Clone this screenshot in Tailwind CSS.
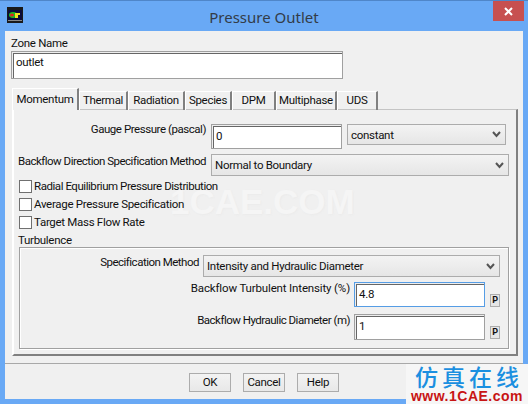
<!DOCTYPE html>
<html lang="en">
<head>
    <meta charset="UTF-8">
    <title>Pressure Outlet</title>
    <script src="https://cdn.jsdelivr.net/npm/@tailwindcss/browser@4"></script>
</head>
<body class="m-0 overflow-hidden">
<div class="relative w-[528px] h-[404px] overflow-hidden bg-[#69a9f5] border-t border-[#4f86c9] font-['Roboto',sans-serif] text-[11.5px] tracking-[-0.3px] leading-[16px] text-[#111]">

    <!-- title bar -->
    <div class="relative h-[30px] flex items-center justify-center">
        <svg class="absolute left-[7px] top-[6px]" width="16" height="16" viewBox="0 0 16 16">
            <rect width="16" height="16" fill="#1a1a1a"/>
            <rect x="1" y="3" width="14" height="10" fill="#0a0a3a"/>
            <ellipse cx="6" cy="8" rx="4" ry="3" fill="#18c020"/>
            <ellipse cx="5" cy="8" rx="2" ry="1.5" fill="#e02020"/>
            <path d="M8 6h5v2h-2v3H8z" fill="#f0e020"/>
            <rect x="1" y="13" width="14" height="1" fill="#888"/>
        </svg>
        <span class="text-[15px] tracking-normal text-[#333c48] font-['Noto_Sans',sans-serif] pt-[1px]">Pressure Outlet</span>
        <div class="absolute left-[493px] top-0 w-[31px] h-[20px] bg-[#c75050] flex items-center justify-center">
            <svg width="9" height="9" viewBox="0 0 9 9"><path d="M1 1l7 7M8 1L1 8" stroke="#fff" stroke-width="2"/></svg>
        </div>
    </div>

    <!-- client area -->
    <div class="ml-[5px] w-[518px] h-[368px] bg-[#f0f0f0] flex flex-col">
        <div class="h-[332px] pl-[6px] pt-[5px]">
            <div class="h-[15px] leading-[15px]">Zone Name</div>
            <div class="w-[332px] h-[28px] border border-[#a0a0a0] bg-white shadow-[inset_1px_1px_0_#eee,inset_2px_2px_0_#666] pl-[4px] pt-[2px]">outlet</div>

            <!-- tabs -->
            <div class="flex items-end h-[22px] mt-[9px] ml-[1px] relative z-10">
                <div class="w-[67px] h-[22px] bg-[#f0f0f0] border-t border-l border-white border-r-2 border-r-[#808080] text-center leading-[20px]">Momentum</div>
                <div class="w-[49px] h-[19px] border-t border-l border-white border-r-2 border-r-[#808080] text-center">Thermal</div>
                <div class="w-[57px] h-[19px] border-t border-l border-white border-r-2 border-r-[#808080] text-center">Radiation</div>
                <div class="w-[47px] h-[19px] border-t border-l border-white border-r-2 border-r-[#808080] text-center">Species</div>
                <div class="w-[44px] h-[19px] border-t border-l border-white border-r-2 border-r-[#808080] text-center">DPM</div>
                <div class="w-[61px] h-[19px] border-t border-l border-white border-r-2 border-r-[#808080] text-center">Multiphase</div>
                <div class="w-[41px] h-[19px] border-t border-l border-white border-r-2 border-r-[#808080] text-center">UDS</div>
            </div>

            <!-- tab panel -->
            <div class="relative w-[506px] h-[247px] ml-[1px] -mt-[1px] border-t border-t-[#c4c4c4] border-l-2 border-l-white border-r-2 border-r-[#808080] border-b-2 border-b-[#808080]">
                <!-- site watermark, behind the form -->
                <div class="absolute left-[156px] top-[72px] text-[35px] tracking-normal leading-[40px] font-bold font-['Liberation_Sans',sans-serif] text-[#f5f5f5] [text-shadow:1px_1px_2px_#ebebeb] pointer-events-none">1CAE.COM</div>

                <div class="relative pt-[14px] pl-[4px]">
                <div class="flex h-[30px]">
                    <div class="w-[188px] text-right -mt-[3px] tracking-[-0.45px]">Gauge Pressure (pascal)</div>
                    <div class="ml-[5px] w-[131px] h-[25px] border border-[#a0a0a0] bg-white shadow-[inset_1px_1px_0_#eee,inset_2px_2px_0_#666] pl-[4px] pt-[3px]">0</div>
                    <div class="ml-[5px] w-[159px] h-[21px] border border-[#acacac] bg-gradient-to-b from-[#f3f3f3] to-[#e6e6e6] flex items-center justify-between pl-[3px] pr-[4px]">
                        <span>constant</span>
                        <svg width="9" height="7" viewBox="0 0 9 7"><path d="M1 1l3.500 4L8 1" fill="none" stroke="#555" stroke-width="2"/></svg>
                    </div>
                </div>
                <div class="flex h-[23px]">
                    <div class="w-[188px] text-right mt-[-1px] whitespace-nowrap tracking-[-0.5px]">Backflow Direction Specification Method</div>
                    <div class="ml-[5px] w-[298px] h-[22px] border border-[#acacac] bg-gradient-to-b from-[#f3f3f3] to-[#e6e6e6] flex items-center justify-between pl-[3px] pr-[4px]">
                        <span>Normal to Boundary</span>
                        <svg width="9" height="7" viewBox="0 0 9 7"><path d="M1 1l3.500 4L8 1" fill="none" stroke="#555" stroke-width="2"/></svg>
                    </div>
                </div>
                <div class="flex items-center h-[18px] ml-[1px]">
                    <div class="w-[13px] h-[13px] border border-[#707070] bg-white"></div>
                    <span class="ml-[2px] tracking-[-0.45px]">Radial Equilibrium Pressure Distribution</span>
                </div>
                <div class="flex items-center h-[18px] ml-[1px]">
                    <div class="w-[13px] h-[13px] border border-[#707070] bg-white"></div>
                    <span class="ml-[2px]">Average Pressure Specification</span>
                </div>
                <div class="flex items-center h-[18px] ml-[1px]">
                    <div class="w-[13px] h-[13px] border border-[#707070] bg-white"></div>
                    <span class="ml-[2px]">Target Mass Flow Rate</span>
                </div>
                <div class="h-[16px] mt-[1px] leading-[16px]">Turbulence</div>

                <!-- turbulence group -->
                <div class="w-[490px] h-[102px] ml-[1px] -mt-[1px] border border-[#a0a0a0] shadow-[inset_1px_1px_0_#fff,1px_1px_0_#fff] pt-[7px] pl-[2px]">
                    <div class="flex h-[27px]">
                        <div class="w-[177px] text-right -mt-[1px] tracking-[-0.5px]">Specification Method</div>
                        <div class="ml-[4px] w-[297px] h-[22px] border border-[#acacac] bg-gradient-to-b from-[#f3f3f3] to-[#e6e6e6] flex items-center justify-between pl-[3px] pr-[4px]">
                            <span>Intensity and Hydraulic Diameter</span>
                            <svg width="9" height="7" viewBox="0 0 9 7"><path d="M1 1l3.500 4L8 1" fill="none" stroke="#555" stroke-width="2"/></svg>
                        </div>
                    </div>
                    <div class="flex h-[32px]">
                        <div class="w-[328px] text-right -mt-[2px] tracking-[-0.15px]">Backflow Turbulent Intensity (%)</div>
                        <div class="ml-[4px] w-[131px] h-[25px] border border-[#569de5] bg-white shadow-[inset_1px_1px_0_#eee,inset_2px_2px_0_#666] pl-[4px] pt-[3px]">4.8</div>
                        <div class="ml-[5px] mt-[12px] w-[10px] h-[13px] border border-[#adadad] bg-[#e6e6e6] text-[9px] leading-[11px] text-center font-bold">P</div>
                    </div>
                    <div class="flex h-[30px]">
                        <div class="w-[328px] text-right -mt-[2px] tracking-[-0.5px]">Backflow Hydraulic Diameter (m)</div>
                        <div class="ml-[4px] w-[131px] h-[26px] border border-[#a0a0a0] bg-white shadow-[inset_1px_1px_0_#eee,inset_2px_2px_0_#666] pl-[4px] pt-[3px]">1</div>
                        <div class="ml-[5px] mt-[12px] w-[10px] h-[13px] border border-[#adadad] bg-[#e6e6e6] text-[9px] leading-[11px] text-center font-bold">P</div>
                    </div>
                </div>
                </div>
            </div>
        </div>

        <!-- footer -->
        <div class="border-t border-[#a8a8a8] mt-[0px] flex justify-start gap-[12px] pl-[184px] pt-[9px]">
            <div class="w-[42px] h-[19px] border border-[#acacac] bg-gradient-to-b from-[#f3f3f3] to-[#e8e8e8] text-center leading-[17px]">OK</div>
            <div class="w-[42px] h-[19px] border border-[#acacac] bg-gradient-to-b from-[#f3f3f3] to-[#e8e8e8] text-center leading-[17px]">Cancel</div>
            <div class="w-[42px] h-[19px] border border-[#acacac] bg-gradient-to-b from-[#f3f3f3] to-[#e8e8e8] text-center leading-[17px]">Help</div>
        </div>
    </div>

    <!-- corner watermark -->
    <div class="absolute left-[406px] top-[363px] w-[122px] h-[41px] bg-[#f6f6f6] flex flex-col items-center">
        <div class="h-[25px] text-[23px] leading-[25px] tracking-[4px] font-medium font-['Noto_Sans_CJK_SC',sans-serif] text-[#1b8fe0] pl-[4px]">仿真在线</div>
        <div class="text-[14px] leading-[15px] font-bold font-['Liberation_Sans',sans-serif] text-[#c81414] tracking-[0.5px]">www.1CAE.com</div>
    </div>
</div>
</body>
</html>
